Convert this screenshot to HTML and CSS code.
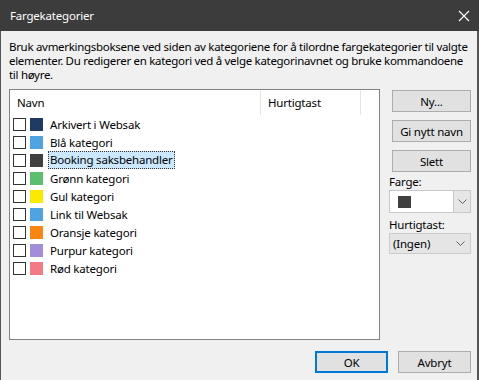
FILE: index.html
```html
<!DOCTYPE html>
<html lang="no">
<head>
<meta charset="utf-8">
<title>Fargekategorier</title>
<link rel="stylesheet" href="styles.css">
</head>
<body>
<div class="window">
  <div class="titlebar">
    <span class="title">Fargekategorier</span>
    <svg class="close" width="12" height="12" viewBox="0 0 12 12"><path d="M1 1 L11 11 M11 1 L1 11" stroke="#ffffff" stroke-width="1.2" fill="none"/></svg>
  </div>
  <div class="content">
    <p class="desc">Bruk avmerkingsboksene ved siden av kategoriene for å tilordne fargekategorier til valgte elementer. Du redigerer en kategori ved å velge kategorinavnet og bruke kommandoene<br>til høyre.</p>
    <div class="main">
      <div class="listbox">
        <div class="header">
          <div class="hcell hname">Navn</div>
          <div class="hcell hkey">Hurtigtast</div>
        </div>
        <div class="row"><span class="check"></span><span class="swatch c-navy"></span><span class="label">Arkivert i Websak</span></div>
        <div class="row"><span class="check"></span><span class="swatch c-blue"></span><span class="label">Blå kategori</span></div>
        <div class="row"><span class="check"></span><span class="swatch c-dark"></span><span class="label selected">Booking saksbehandler</span></div>
        <div class="row"><span class="check"></span><span class="swatch c-green"></span><span class="label">Grønn kategori</span></div>
        <div class="row"><span class="check"></span><span class="swatch c-yellow"></span><span class="label">Gul kategori</span></div>
        <div class="row"><span class="check"></span><span class="swatch c-blue"></span><span class="label">Link til Websak</span></div>
        <div class="row"><span class="check"></span><span class="swatch c-orange"></span><span class="label">Oransje kategori</span></div>
        <div class="row"><span class="check"></span><span class="swatch c-purple"></span><span class="label">Purpur kategori</span></div>
        <div class="row"><span class="check"></span><span class="swatch c-red"></span><span class="label">Rød kategori</span></div>
      </div>
      <div class="side">
        <button class="btn side-btn">Ny...</button>
        <button class="btn side-btn">Gi nytt navn</button>
        <button class="btn side-btn">Slett</button>
        <div class="field-label first">Farge:</div>
        <div class="colorbox">
          <span class="colorbox-swatch"></span>
          <span class="arrowbox"><svg width="9" height="5" viewBox="0 0 9 5"><path d="M0.5 0.5 L4.5 4.5 L8.5 0.5" stroke="#606060" fill="none"/></svg></span>
        </div>
        <div class="field-label second">Hurtigtast:</div>
        <div class="combo">
          <span>(Ingen)</span>
          <svg width="9" height="5" viewBox="0 0 9 5"><path d="M0.5 0.5 L4.5 4.5 L8.5 0.5" stroke="#606060" fill="none"/></svg>
        </div>
      </div>
    </div>
    <div class="footer">
      <button class="btn foot-btn default">OK</button>
      <button class="btn foot-btn">Avbryt</button>
    </div>
  </div>
</div>
</body>
</html>
```
FILE: styles.css
```css
html, body {
  margin: 0;
  padding: 0;
}
body {
  width: 479px;
  height: 380px;
  overflow: hidden;
  background: #f0f0f0;
  font-family: "Noto Sans", "Open Sans", sans-serif;
  font-size: 11.5px;
  letter-spacing: -0.2px;
  color: #000;
}
.window {
  width: 479px;
  height: 380px;
  box-sizing: border-box;
  border-left: 1px solid #555555;
  border-right: 2px solid #555555;
  background: #f0f0f0;
}
.titlebar {
  height: 31px;
  background: #3c3c3c;
  color: #ffffff;
  display: flex;
  align-items: center;
  justify-content: space-between;
  padding: 0 9px 0 10px;
  margin: 0 -2px 0 -1px;
}
.title {
  font-size: 11.5px;
}
.close {
  display: block;
}
.content {
  padding: 0 0 0 8px;
}
.desc {
  margin: 9px 0 0 0;
  line-height: 14px;
  width: 468px;
  letter-spacing: -0.3px;
}
.main {
  display: flex;
  margin-top: 7px;
}
.listbox {
  width: 371px;
  height: 251px;
  box-sizing: border-box;
  border: 1px solid #828282;
  background: #ffffff;
}
.header {
  display: flex;
  height: 25px;
}
.hcell {
  box-sizing: border-box;
  padding-left: 7px;
  display: flex;
  align-items: center;
  border-right: 1px solid #e5e5e5;
}
.hname { width: 251px; }
.hkey { width: 100px; }
.row {
  height: 18px;
  display: flex;
  align-items: center;
  padding-left: 3px;
}
.check {
  width: 13px;
  height: 13px;
  box-sizing: border-box;
  border: 1px solid #333333;
  background: #fff;
}
.swatch {
  width: 13px;
  height: 13px;
  margin-left: 4px;
}
.c-navy { background: #203a66; }
.c-blue { background: #4fa3e0; }
.c-dark { background: #404040; }
.c-green { background: #5bbf6d; }
.c-yellow { background: #fbe900; }
.c-orange { background: #f98512; }
.c-purple { background: #a28ddb; }
.c-red { background: #f27b85; }
.label {
  margin-left: 5px;
  padding: 0 1px;
  height: 18px;
  line-height: 18px;
  box-sizing: border-box;
  border: 1px solid transparent;
}
.label.selected {
  background: #cce8ff;
  border: 1px dotted #333333;
  line-height: 16px;
}
.side {
  width: 82px;
  margin-left: 9px;
  display: flex;
  flex-direction: column;
  align-items: flex-end;
  padding-top: 1px;
}
.btn {
  font-family: inherit;
  font-size: 11.5px;
  letter-spacing: -0.2px;
  color: #000;
  background: #e1e1e1;
  border: 1px solid #adadad;
  box-sizing: border-box;
  padding: 0;
  margin: 0;
}
.side-btn {
  width: 79px;
  height: 22px;
  margin-bottom: 8px;
}
.side-btn:nth-of-type(3) { margin-bottom: 0; }
.field-label {
  align-self: stretch;
  height: 16px;
  line-height: 16px;
}
.field-label.first { margin-top: 2px; }
.field-label.second { margin-top: 4px; }
.colorbox {
  align-self: stretch;
  height: 23px;
  box-sizing: border-box;
  border: 1px solid #c8c8c8;
  background: #ffffff;
  display: flex;
  align-items: center;
  justify-content: space-between;
}
.colorbox-swatch {
  width: 13px;
  height: 12px;
  margin-left: 8px;
  background: #404040;
}
.arrowbox {
  width: 17px;
  height: 21px;
  box-sizing: border-box;
  border-left: 1px solid #c8c8c8;
  background: #e6e6e6;
  display: flex;
  align-items: center;
  justify-content: center;
}
.combo {
  align-self: stretch;
  height: 21px;
  box-sizing: border-box;
  border: 1px solid #cccccc;
  background: #e5e5e5;
  display: flex;
  align-items: center;
  justify-content: space-between;
  padding: 0 5px 0 3px;
}
.footer {
  display: flex;
  justify-content: flex-end;
  gap: 10px;
  padding-right: 6px;
  margin-top: 11px;
}
.foot-btn {
  width: 73px;
  height: 22px;
}
.foot-btn.default {
  border: 2px solid #0078d7;
}
```
